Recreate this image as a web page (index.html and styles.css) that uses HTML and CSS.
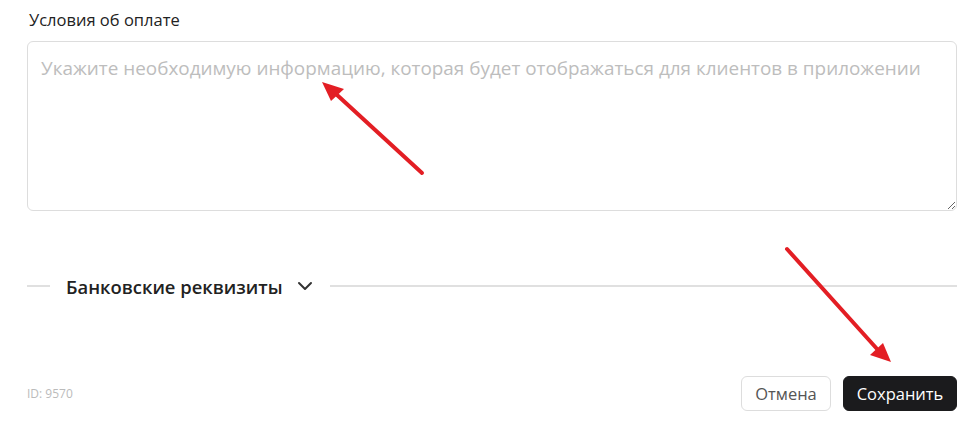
FILE: index.html
```html
<!DOCTYPE html>
<html lang="ru">
<head>
<meta charset="utf-8">
<link rel="stylesheet" href="styles.css">
</head>
<body>
<div class="page">
  <label class="field-label" for="terms">Условия об оплате</label>
  <textarea id="terms" class="textarea" placeholder="Укажите необходимую информацию, которая будет отображаться для клиентов в приложении"></textarea>

  <div class="divider">
    <span class="line short"></span>
    <span class="divider-title">Банковские реквизиты</span>
    <svg class="chevron" width="16" height="10" viewBox="0 0 16 10"><path d="M2 2l6 6 6-6" fill="none" stroke="#333" stroke-width="2" stroke-linecap="round" stroke-linejoin="round"/></svg>
    <span class="line long"></span>
  </div>

  <div class="footer">
    <span class="id">ID: 9570</span>
    <div class="actions">
      <button class="btn btn-cancel">Отмена</button>
      <button class="btn btn-save">Сохранить</button>
    </div>
  </div>
</div>
<svg class="arrows" width="977" height="426" viewBox="0 0 977 426">
  <line x1="422" y1="173" x2="336" y2="94" stroke="#e31e24" stroke-width="4" stroke-linecap="round"/>
  <path d="M322 82L344 89L331 101z" fill="#e31e24"/>
  <line x1="787" y1="249" x2="878" y2="350" stroke="#e31e24" stroke-width="4" stroke-linecap="round"/>
  <path d="M891 362L870 355L883 343z" fill="#e31e24"/>
</svg>
</body>
</html>
```
FILE: styles.css
```css
html, body {
  margin: 0;
  padding: 0;
  background: #fff;
}
body {
  font-family: "Open Sans", "Noto Sans", sans-serif;
  color: #222;
}
.page {
  width: 930px;
  padding: 0 20px 0 27px;
  display: flex;
  flex-direction: column;
}
.field-label {
  display: block;
  font-size: 16.5px;
  line-height: 20px;
  margin: 10px 0 0 2px;
  color: #222;
}
.textarea {
  margin-top: 11px;
  box-sizing: border-box;
  width: 930px;
  height: 170px;
  border: 1px solid #ddd;
  border-radius: 6px;
  padding: 12px 13px;
  font-family: "Open Sans", sans-serif;
  font-size: 18.9px;
  line-height: 28px;
  color: #333;
  resize: vertical;
  outline: none;
}
.textarea::placeholder {
  color: #bdbdbd;
}
.divider {
  margin-top: 63px;
  display: flex;
  align-items: center;
  height: 24px;
}
.line {
  height: 2px;
  background: #e0e0e0;
}
.line.short {
  width: 23px;
}
.line.long {
  flex: 1;
}
.divider-title {
  margin-left: 16px;
  font-size: 18.4px;
  font-weight: 600;
  color: #222;
}
.chevron {
  margin-left: 14px;
  margin-right: 17px;
}
.footer {
  margin-top: 78px;
  display: flex;
  align-items: center;
  justify-content: space-between;
}
.id {
  font-size: 12px;
  color: #bbb;
}
.actions {
  display: flex;
  gap: 12px;
}
.btn {
  height: 35px;
  border-radius: 6px;
  font-family: "Open Sans", sans-serif;
  font-size: 16.5px;
  padding: 0;
  cursor: pointer;
}
.btn-cancel {
  width: 90px;
  background: #fff;
  border: 1px solid #ddd;
  color: #555;
}
.btn-save {
  width: 114px;
  background: #1b1b1d;
  border: 1px solid #1b1b1d;
  color: #fff;
}
.arrows {
  position: absolute;
  left: 0;
  top: 0;
  pointer-events: none;
}
```
